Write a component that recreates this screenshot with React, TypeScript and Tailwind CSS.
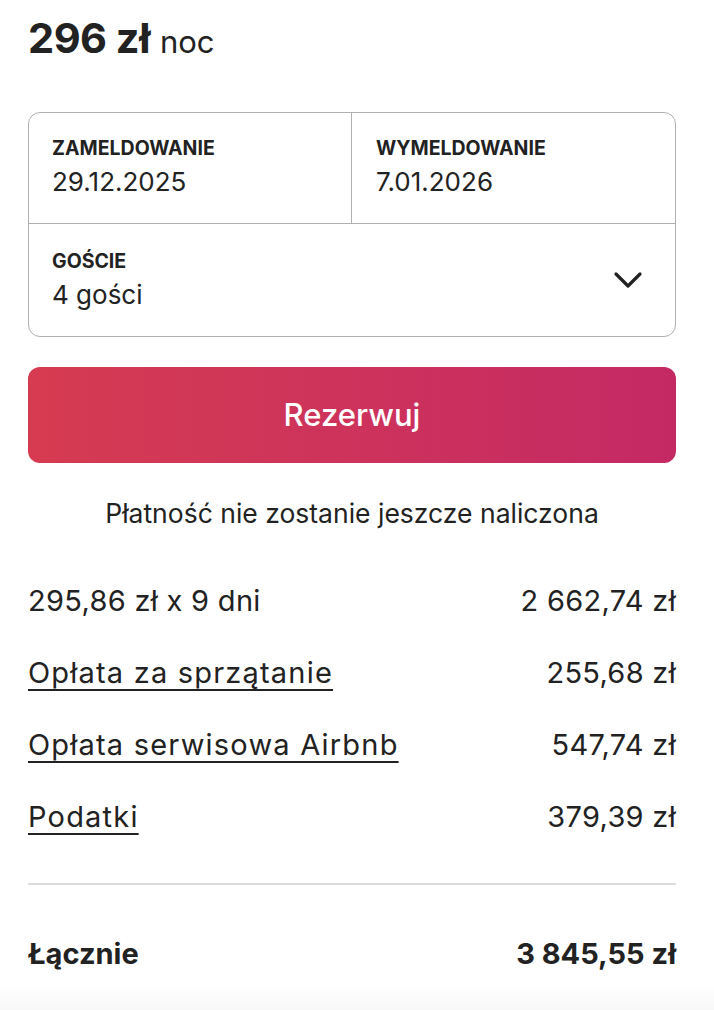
import React from 'react';

const font = { fontFamily: 'Inter, "Noto Sans", sans-serif' };

interface FeeRow {
  label: string;
  amount: string;
  link?: boolean;
}

const fees: FeeRow[] = [
  { label: '295,86 zł x 9 dni', amount: '2 662,74 zł' },
  { label: 'Opłata za sprzątanie', amount: '255,68 zł', link: true },
  { label: 'Opłata serwisowa Airbnb', amount: '547,74 zł', link: true },
  { label: 'Podatki', amount: '379,39 zł', link: true },
];

function Chevron() {
  return (
    <svg width="32" height="32" viewBox="0 0 32 32" fill="none">
      <path d="M4 10l12 12 12-12" stroke="#222222" strokeWidth="3.2" strokeLinecap="round" strokeLinejoin="round" />
    </svg>
  );
}

export default function App() {
  return (
    <div className="w-[714px] min-h-[1010px] bg-white text-[#222222]" style={font}>
      <div className="pl-[28px] pr-[38px]">
        {/* price per night */}
        <div className="h-[112px] pt-[13px]">
          <span className="text-[41.5px] leading-[50px] font-bold tracking-[-0.5px]">296 zł</span>
          <span className="text-[31px] leading-[50px] ml-[10px]">noc</span>
        </div>

        {/* dates + guests */}
        <div className="border border-[#b0b0b0] rounded-[12px]">
          <div className="grid grid-cols-2 h-[111px] border-b border-[#b0b0b0]">
            <div className="pl-[23px] pt-[23px] border-r border-[#b0b0b0]">
              <div className="text-[19.5px] leading-[24px] font-bold">ZAMELDOWANIE</div>
              <div className="text-[26px] leading-[32px] mt-[6px]">29.12.2025</div>
            </div>
            <div className="pl-[24px] pt-[23px]">
              <div className="text-[19.5px] leading-[24px] font-bold">WYMELDOWANIE</div>
              <div className="text-[26px] leading-[32px] mt-[6px]">7.01.2026</div>
            </div>
          </div>
          <div className="h-[112px] flex items-center justify-between pl-[23px] pr-[31px]">
            <div className="-mt-[1px]">
              <div className="text-[19.5px] leading-[24px] font-bold">GOŚCIE</div>
              <div className="text-[26px] leading-[32px] mt-[6px]">4 gości</div>
            </div>
            <Chevron />
          </div>
        </div>

        {/* reserve */}
        <button className="mt-[30px] w-full h-[96px] rounded-[12px] bg-gradient-to-r from-[#d63b51] to-[#c42964] text-white text-[31px] font-medium">
          Rezerwuj
        </button>

        <div className="h-[102px] flex items-center justify-center text-[26.5px]">
          Płatność nie zostanie jeszcze naliczona
        </div>

        {/* fees */}
        {fees.map((f) => (
          <div key={f.label} className="h-[72px] flex items-center justify-between text-[29px] tracking-[0.3px]">
            <span className={f.link ? 'underline underline-offset-[6px] decoration-[1.5px] tracking-[1.2px]' : ''}>{f.label}</span>
            <span>{f.amount}</span>
          </div>
        ))}

        <div className="mt-[30px] h-[2px] bg-[#dddddd]" />

        <div className="h-[100px] pt-[50px] flex justify-between items-start text-[29px] font-bold">
          <span className="leading-[38px]">Łącznie</span>
          <span className="leading-[38px]">3 845,55 zł</span>
        </div>
      </div>
      <div className="h-[40px] bg-gradient-to-b from-white to-[#f3f3f3]" />
    </div>
  );
}
